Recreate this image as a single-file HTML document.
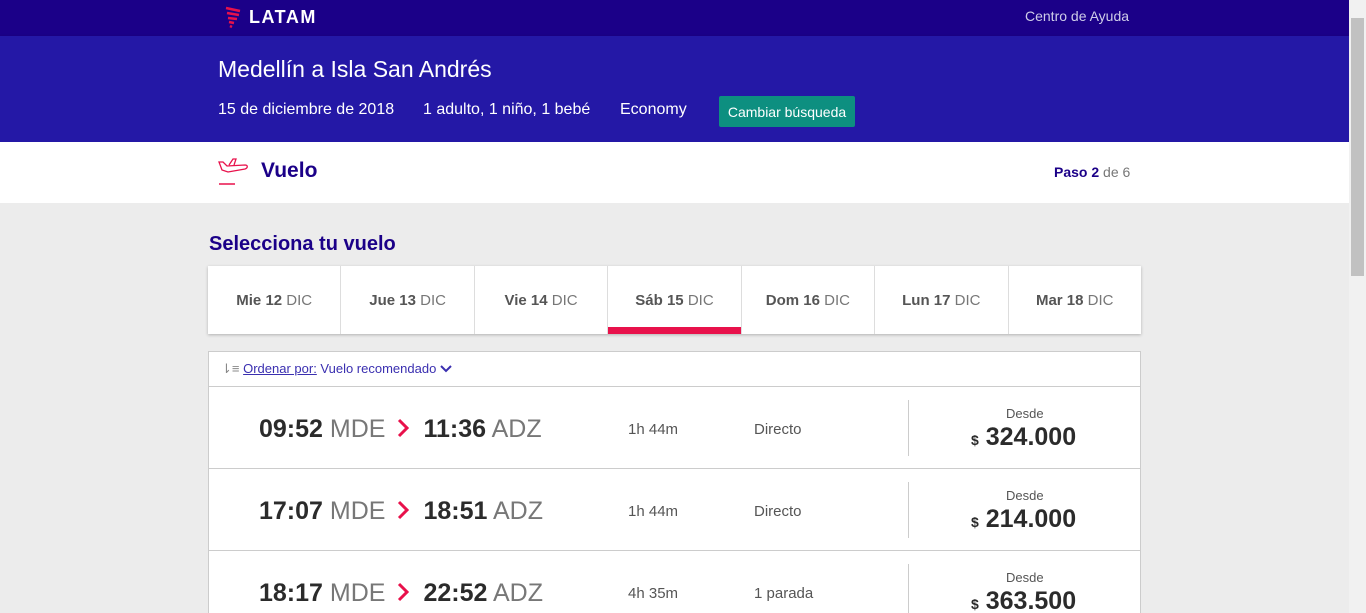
<!DOCTYPE html>
<html><head><meta charset="utf-8"><style>
*{box-sizing:border-box;margin:0;padding:0}
html,body{width:1366px;height:613px;overflow:hidden}
body{background:#ececec;font-family:"Liberation Sans",sans-serif;position:relative}
.top{position:absolute;left:0;top:0;width:1349px;height:36px;background:#1b0088}
.hdr{position:absolute;left:0;top:36px;width:1349px;height:106px;background:#2418a6;box-shadow:0 2px 4px rgba(0,0,0,.3);color:#fff}
.step{position:absolute;left:0;top:142px;width:1349px;height:61px;background:#fff}
.sb{position:absolute;left:1349px;top:0;width:17px;height:613px;background:#f1f1f1}
.sb div{position:absolute;left:2px;top:18px;width:13px;height:258px;background:#c1c1c1}
.abs{position:absolute;white-space:nowrap}
.tabs{position:absolute;left:208px;top:266px;width:933px;height:68px;background:#fff;box-shadow:0 1px 3px rgba(0,0,0,.25);display:flex}
.tab{flex:1;border-right:1px solid #ddd;text-align:center;line-height:70px;font-size:15px;color:#444;position:relative}
.tab:last-child{border-right:0}
.tab b{color:#555}.tab span{color:#777}
.tab.on:after{content:"";position:absolute;left:0;right:0;bottom:0;height:7px;background:#e8114b}
.list{position:absolute;left:208px;top:351px;width:933px;height:270px;background:#fff;border:1px solid #ccc}
.row{position:absolute;left:0;width:931px;height:82px;border-top:1px solid #ccc}
.fl{font-size:25px;line-height:30px}
.t{font-size:25px;font-weight:bold;color:#2b2b2b}
.c{font-size:25px;color:#777;font-weight:normal}
.ar{display:inline-block;vertical-align:-1px;margin:0 14px 0 12px}
</style></head><body>
<div class="top"></div>
<div class="abs" style="left:224px;top:6px">
<svg width="18" height="26" viewBox="0 0 18 26"><path d="M2 2L16 5M3 7L15 9M4 12L13 13M5 16L10 17M6 20L8 21" stroke="#e8114b" stroke-width="2.5" fill="none"/></svg></div>
<div class="abs" style="left:249px;top:7px;color:#fff;font-weight:bold;font-size:18px;letter-spacing:1.5px">LATAM</div>
<div class="abs" style="left:1025px;top:8px;color:#cfcde8;font-size:14px">Centro de Ayuda</div>
<div class="hdr">
<div class="abs" style="left:218px;top:20px;font-size:23px">Medellín a Isla San Andrés</div>
<div class="abs" style="left:218px;top:65px;font-size:16px">15 de diciembre de 2018</div>
<div class="abs" style="left:423px;top:65px;font-size:16px">1 adulto, 1 niño, 1 bebé</div>
<div class="abs" style="left:620px;top:65px;font-size:16px">Economy</div>
<div class="abs" style="left:719px;top:60px;width:136px;height:31px;background:#0d8f80;border-radius:2px;font-size:14px;line-height:33px;text-align:center">Cambiar búsqueda</div>
</div>
<div class="step">
<svg class="abs" style="left:217px;top:14px" width="32" height="32" viewBox="0 0 32 32"><path d="M2 6l4 0 4 4 18 -1c3 0 3 3 0 4l-17 3-6-2zM12 9l4-6h3l-2 6" stroke="#e8114b" stroke-width="1.3" fill="none"/><path d="M2 28h16" stroke="#e8114b" stroke-width="1.5"/></svg>
<div class="abs" style="left:261px;top:17px;font-size:21px;font-weight:bold;color:#1b0088">Vuelo</div>
<div class="abs" style="left:1054px;top:22px;font-size:14px;color:#777"><b style="color:#1b0088">Paso 2</b> de 6</div>
</div>
<div class="abs" style="left:209px;top:233px;font-size:20px;font-weight:bold;color:#1b0088">Selecciona tu vuelo</div>
<div class="tabs">
<div class="tab"><b>Mie 12</b> <span>DIC</span></div>
<div class="tab"><b>Jue 13</b> <span>DIC</span></div>
<div class="tab"><b>Vie 14</b> <span>DIC</span></div>
<div class="tab on"><b>Sáb 15</b> <span>DIC</span></div>
<div class="tab"><b>Dom 16</b> <span>DIC</span></div>
<div class="tab"><b>Lun 17</b> <span>DIC</span></div>
<div class="tab"><b>Mar 18</b> <span>DIC</span></div>
</div>
<div class="list">
<div class="abs" style="left:12px;top:9px;font-size:13px;color:#3a2fb0"><span style="color:#888">⇂≡</span> <u>Ordenar por:</u> Vuelo recomendado <svg width="12" height="8" viewBox="0 0 12 8"><path d="M1 1l5 5 5-5" stroke="#3a2fb0" stroke-width="2" fill="none"/></svg></div>
<div class="row" style="top:34px">
<div class="abs fl" style="left:50px;top:27px"><span class="t">09:52</span> <span class="c">MDE</span><svg class="ar" width="12" height="20" viewBox="0 0 12 20"><path d="M2 2l8 8-8 8" stroke="#e8114b" stroke-width="3" fill="none"/></svg><span class="t">11:36</span> <span class="c">ADZ</span></div>
<div class="abs" style="left:419px;top:34px;font-size:15px;color:#555">1h 44m</div>
<div class="abs" style="left:545px;top:34px;font-size:15px;color:#555">Directo</div>
<div class="abs" style="left:699px;top:13px;width:1px;height:56px;background:#ccc"></div>
<div class="abs" style="left:797px;top:19px;font-size:13px;color:#555">Desde</div>
<div class="abs" style="left:762px;top:36px;font-size:25px;color:#2b2b2b;font-weight:bold"><span style="font-size:14px">$</span> 324.000</div>
</div>
<div class="row" style="top:116px">
<div class="abs fl" style="left:50px;top:27px"><span class="t">17:07</span> <span class="c">MDE</span><svg class="ar" width="12" height="20" viewBox="0 0 12 20"><path d="M2 2l8 8-8 8" stroke="#e8114b" stroke-width="3" fill="none"/></svg><span class="t">18:51</span> <span class="c">ADZ</span></div>
<div class="abs" style="left:419px;top:34px;font-size:15px;color:#555">1h 44m</div>
<div class="abs" style="left:545px;top:34px;font-size:15px;color:#555">Directo</div>
<div class="abs" style="left:699px;top:13px;width:1px;height:56px;background:#ccc"></div>
<div class="abs" style="left:797px;top:19px;font-size:13px;color:#555">Desde</div>
<div class="abs" style="left:762px;top:36px;font-size:25px;color:#2b2b2b;font-weight:bold"><span style="font-size:14px">$</span> 214.000</div>
</div>
<div class="row" style="top:198px">
<div class="abs fl" style="left:50px;top:27px"><span class="t">18:17</span> <span class="c">MDE</span><svg class="ar" width="12" height="20" viewBox="0 0 12 20"><path d="M2 2l8 8-8 8" stroke="#e8114b" stroke-width="3" fill="none"/></svg><span class="t">22:52</span> <span class="c">ADZ</span></div>
<div class="abs" style="left:419px;top:34px;font-size:15px;color:#555">4h 35m</div>
<div class="abs" style="left:545px;top:34px;font-size:15px;color:#555">1 parada</div>
<div class="abs" style="left:699px;top:13px;width:1px;height:56px;background:#ccc"></div>
<div class="abs" style="left:797px;top:19px;font-size:13px;color:#555">Desde</div>
<div class="abs" style="left:762px;top:36px;font-size:25px;color:#2b2b2b;font-weight:bold"><span style="font-size:14px">$</span> 363.500</div>
</div>
</div>
<div class="sb"><div></div></div>
</body></html>
